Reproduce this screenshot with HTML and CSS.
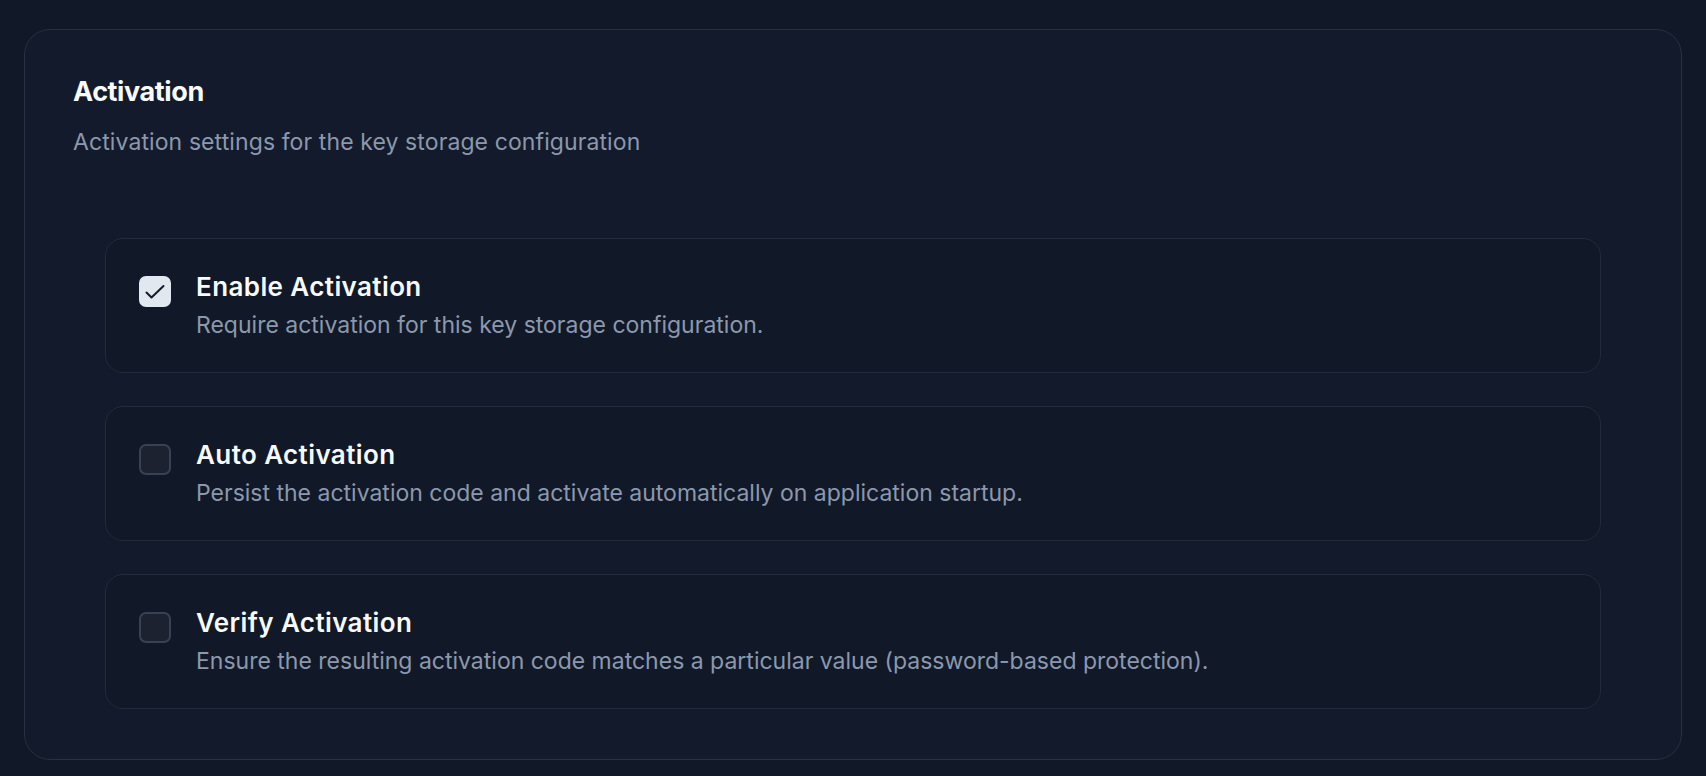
FILE: index.html
```html
<!DOCTYPE html>
<html>
  <head>
    <meta charset='utf-8'>
    <title>Activation</title>
    <meta name='viewport' content='width=device-width, initial-scale=1'>
    <link rel="stylesheet" href="styles.css">
  </head>

  <body>
    <main class="page">
      <section class="panel">
        <h2 class="panel-title">Activation</h2>
        <p class="panel-desc">Activation settings for the key storage configuration</p>

        <div class="options">
          <label class="option">
            <span class="check checked">
              <svg viewBox="0 0 24 24" width="24" height="24"><path d="M3.5 12.5l5 5L20.5 6" fill="none" stroke="#151b2b" stroke-width="2" stroke-linecap="round" stroke-linejoin="round"/></svg>
            </span>
            <span class="option-text">
              <span class="option-title">Enable Activation</span>
              <span class="option-desc">Require activation for this key storage configuration.</span>
            </span>
          </label>

          <label class="option">
            <span class="check"></span>
            <span class="option-text">
              <span class="option-title">Auto Activation</span>
              <span class="option-desc">Persist the activation code and activate automatically on application startup.</span>
            </span>
          </label>

          <label class="option">
            <span class="check"></span>
            <span class="option-text">
              <span class="option-title">Verify Activation</span>
              <span class="option-desc">Ensure the resulting activation code matches a particular value (password-based protection).</span>
            </span>
          </label>
        </div>
      </section>
    </main>
  </body>
</html>
```

FILE: styles.css
```css
html, body {
  margin: 0;
  background: #111827;
  font-family: Inter, "Noto Sans", sans-serif;
  color: #f8fafc;
}

.page {
  padding: 29px 24px 24px;
}

.panel {
  background: #131a2b;
  border: 1px solid #283041;
  border-radius: 26px;
  padding: 44px 48px 50px;
}

.panel-title {
  margin: 0;
  font-size: 27px;
  font-weight: 700;
  line-height: 36px;
  letter-spacing: -0.4px;
}

.panel-desc {
  margin: 16px 0 0;
  font-size: 23px;
  line-height: 32px;
  letter-spacing: 0.1px;
  color: #8b98ad;
}

.options {
  display: flex;
  flex-direction: column;
  gap: 33px;
  padding: 0 32px;
  margin-top: 80px;
}

.option {
  display: flex;
  gap: 25px;
  align-items: flex-start;
  background: #111827;
  border: 1px solid #232a3a;
  border-radius: 18px;
  padding: 31px 33px 31px;
}

.check {
  flex: none;
  box-sizing: border-box;
  width: 32px;
  height: 31px;
  margin-top: 6px;
  border: 2px solid #394152;
  border-radius: 7px;
  background: #1d2231;
  display: flex;
  align-items: center;
  justify-content: center;
}

.check.checked {
  background: #e2e8f0;
  border-color: #e2e8f0;
}

.option-text {
  display: flex;
  flex-direction: column;
  gap: 5px;
}

.option-title {
  font-size: 26px;
  font-weight: 600;
  line-height: 34px;
  letter-spacing: 0.4px;
}

.option-desc {
  font-size: 23px;
  line-height: 32px;
  color: #8b98ad;
}
```
